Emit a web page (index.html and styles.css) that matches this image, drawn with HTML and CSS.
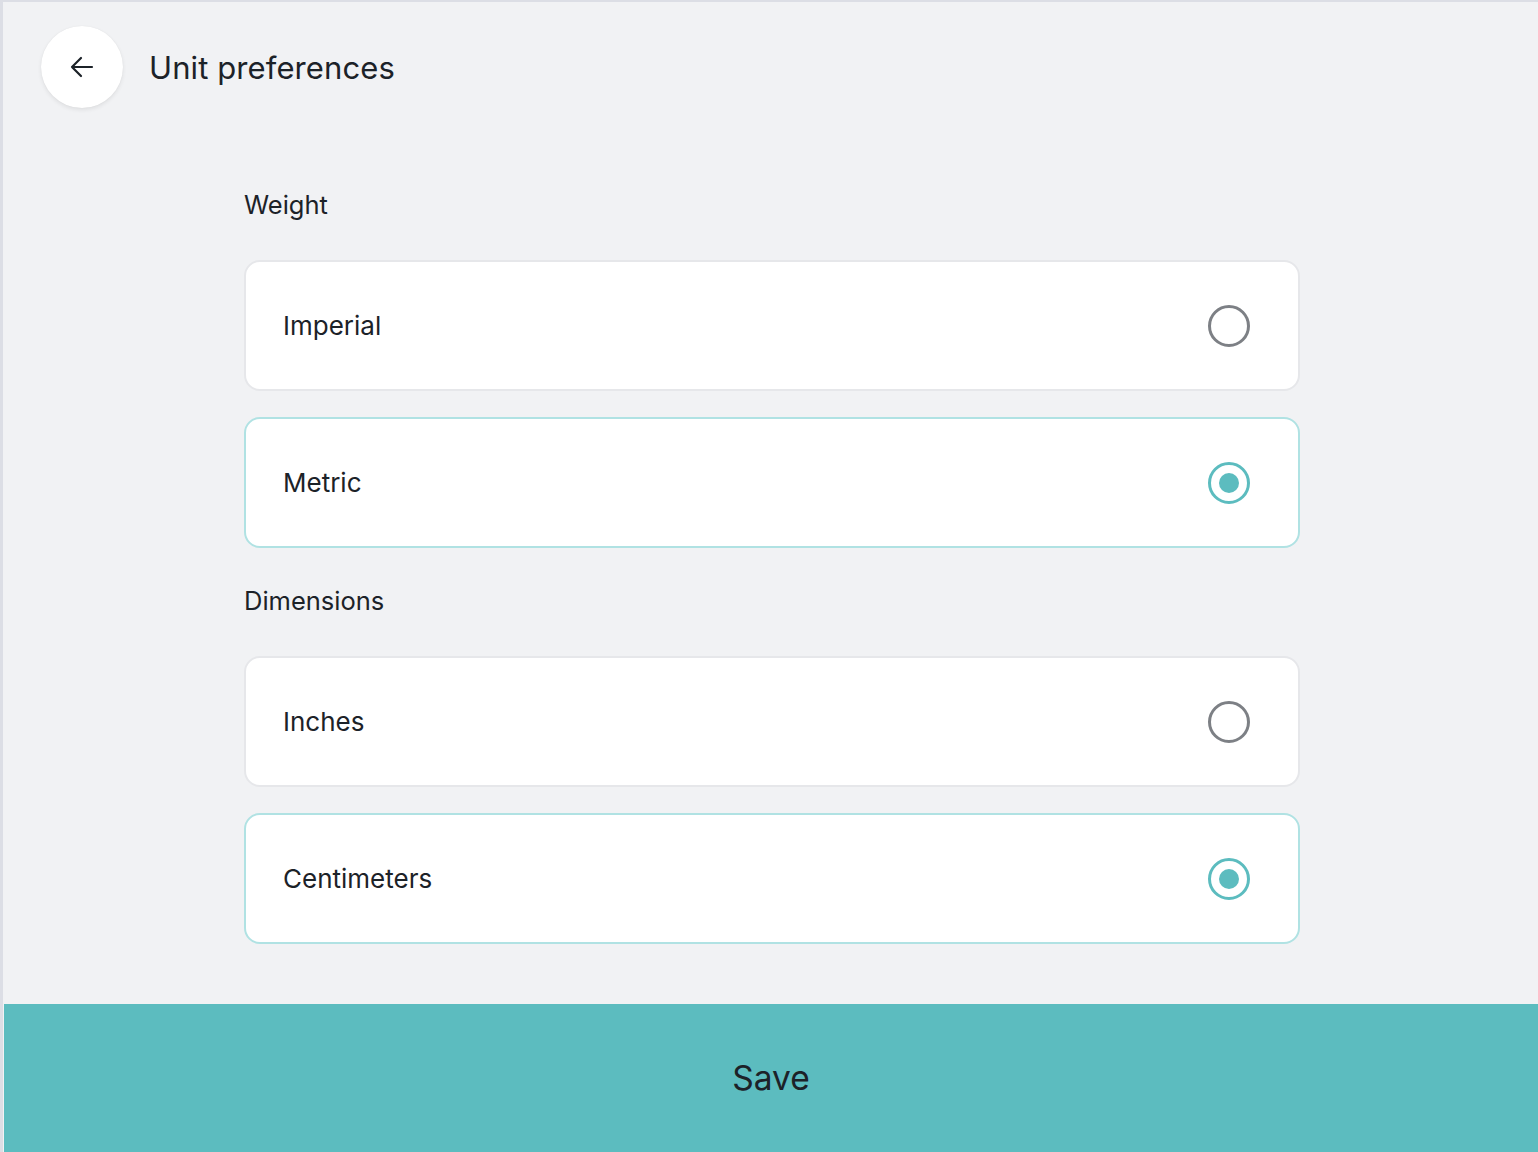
FILE: index.html
```html
<!DOCTYPE html>
<html>
<head>
<meta charset="utf-8">
<link rel="stylesheet" href="styles.css">
</head>
<body>
<div class="frame">
  <header class="topbar">
    <button class="back" aria-label="Back">
      <svg width="28" height="28" viewBox="0 0 28 28" fill="none" stroke="#1c2228" stroke-width="2.2" stroke-linecap="round" stroke-linejoin="round"><path d="M24 14H4M13 5l-9 9 9 9"/></svg>
    </button>
    <h1 class="title">Unit preferences</h1>
  </header>
  <main class="content">
    <section class="group">
      <h2 class="label">Weight</h2>
      <div class="option"><span>Imperial</span><span class="radio"></span></div>
      <div class="option selected"><span>Metric</span><span class="radio"></span></div>
    </section>
    <section class="group">
      <h2 class="label">Dimensions</h2>
      <div class="option"><span>Inches</span><span class="radio"></span></div>
      <div class="option selected"><span>Centimeters</span><span class="radio"></span></div>
    </section>
  </main>
  <footer class="save">Save</footer>
</div>
</body>
</html>
```

FILE: styles.css
```css
html, body {
  margin: 0;
  padding: 0;
  height: 100%;
}
body {
  font-family: Inter, "Noto Sans", sans-serif;
  color: #1c2228;
  background: #f1f2f4;
}
.frame {
  box-sizing: border-box;
  height: 1152px;
  border-left: 3px solid #dcdee5;
  border-top: 2px solid #dcdee5;
  background: #f1f2f4;
  display: flex;
  flex-direction: column;
  padding-left: 1px;
}
.topbar {
  display: flex;
  align-items: center;
  gap: 26px;
  padding: 24px 0 0 37px;
}
.back {
  width: 82px;
  height: 82px;
  border-radius: 50%;
  border: none;
  background: #fff;
  box-shadow: 0 2px 4px rgba(0,0,0,0.08), 0 0 1px rgba(0,0,0,0.08);
  display: flex;
  align-items: center;
  justify-content: center;
  padding: 0;
}
.title {
  margin: 0;
  font-size: 31px;
  font-weight: 400;
  letter-spacing: 0.1px;
}
.content {
  box-sizing: border-box;
  width: 1058px;
  margin: 0 auto;
  padding: 82px 0 0 2px;
  flex: 1;
}
.group {
  display: flex;
  flex-direction: column;
  gap: 26px;
}
.group + .group {
  margin-top: 38px;
}
.label {
  margin: 0 0 14px;
  font-size: 25.5px;
  font-weight: 400;
  line-height: 30px;
}
.option {
  box-sizing: border-box;
  height: 131px;
  background: #fff;
  border: 2px solid #e6e7ea;
  border-radius: 16px;
  display: flex;
  align-items: center;
  justify-content: space-between;
  padding: 0 48px 0 37px;
  font-size: 26px;
}
.option.selected {
  border-color: #b0e2e3;
}
.radio {
  box-sizing: border-box;
  width: 42px;
  height: 42px;
  border-radius: 50%;
  border: 3px solid #7d8085;
  display: flex;
  align-items: center;
  justify-content: center;
}
.selected .radio {
  border-color: #5cbcbf;
}
.selected .radio::after {
  content: "";
  width: 20px;
  height: 20px;
  border-radius: 50%;
  background: #5cbcbf;
}
.save {
  height: 148px;
  background: #5cbcbf;
  display: flex;
  align-items: center;
  justify-content: center;
  font-size: 33.5px;
  color: #1c2228;
}
```
